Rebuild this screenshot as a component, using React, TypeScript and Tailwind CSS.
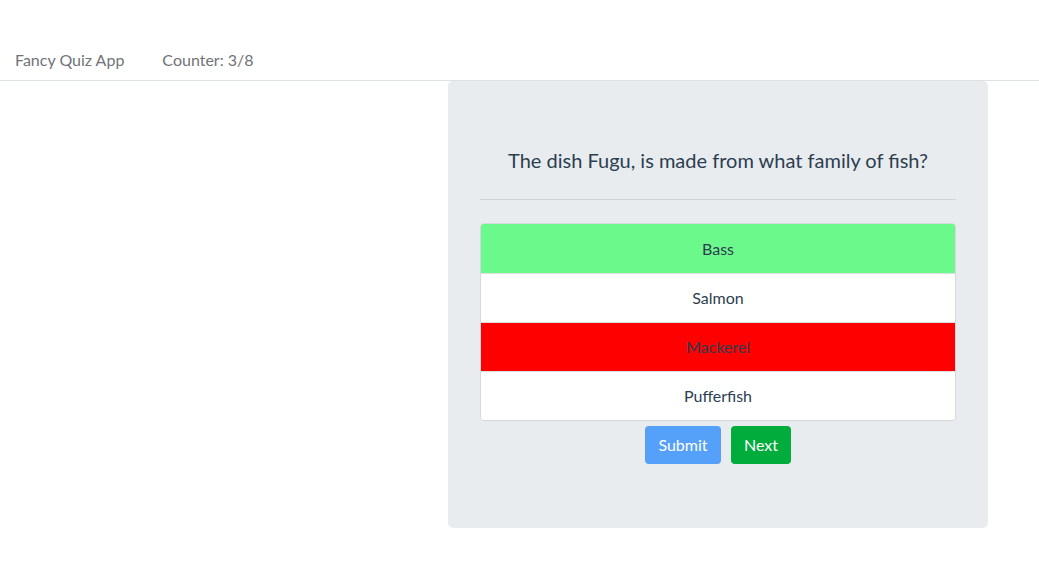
import React from "react";

export default function App() {
  const answers = [
    { t: "Bass", cls: "bg-[#6cf98b]" },
    { t: "Salmon", cls: "bg-white" },
    { t: "Mackerel", cls: "bg-[#ff0000]" },
    { t: "Pufferfish", cls: "bg-white" },
  ];
  return (
    <div className="min-h-[577px] bg-white text-[#2c3e50]" style={{ fontFamily: "Lato, 'Noto Sans', sans-serif" }}>
      <header className="h-[81px] border-b border-[#dee2e6] flex items-end pb-[8px] px-[15px] gap-[38px] text-[16px] text-[#6f7378]">
        <span>Fancy Quiz App</span>
        <span>Counter: 3/8</span>
      </header>
      <div className="ml-[448px] w-[540px] h-[447px] bg-[#e9ecef] rounded-[5px] px-[32px] pt-[64px]">
        <p className="text-center text-[20px] leading-[30px] text-[#2c3e50]">The dish Fugu, is made from what family of fish?</p>
        <hr className="mt-[24px] border-0 border-t border-[#cfd3d7]" />
        <ul className="mt-[23px] rounded-[4px] border border-[#d6d8da] overflow-hidden">
          {answers.map((a, i) => (
            <li
              key={a.t}
              className={`${a.cls} h-[49px] flex items-center justify-center text-[16px] ${i > 0 ? "border-t border-[#dcdfe2]" : ""}`}
            >
              {a.t}
            </li>
          ))}
        </ul>
        <div className="mt-[5px] flex justify-center gap-[10px]">
          <button className="h-[38px] w-[76px] rounded-[4px] bg-[#55a0f9] text-white text-[16px]">Submit</button>
          <button className="h-[38px] w-[60px] rounded-[4px] bg-[#00ad3c] text-white text-[16px]">Next</button>
        </div>
      </div>
    </div>
  );
}
